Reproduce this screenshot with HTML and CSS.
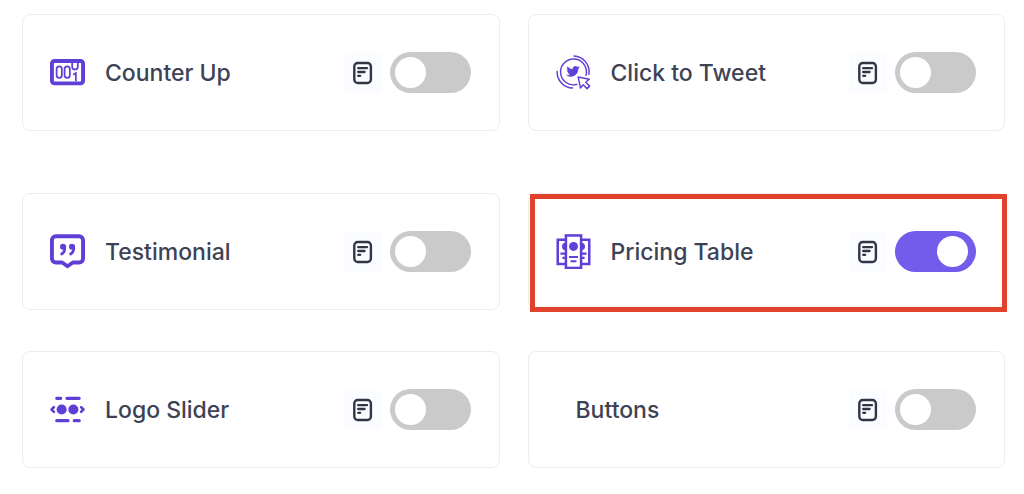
FILE: index.html
```html
<!DOCTYPE html>
<html lang="en">
<head>
<meta charset="utf-8">
<title>Blocks</title>
<link rel="stylesheet" href="styles.css">
</head>
<body>
<svg class="sprite" aria-hidden="true">
  <symbol id="doc" viewBox="0 0 20 24">
    <rect x="1.3" y="2" width="16.6" height="20" rx="3.4" fill="none" stroke="currentColor" stroke-width="2.4"/>
    <path d="M5.2 7.200h8.800M5.200 11h6.400M5.200 14.800h2" fill="none" stroke="currentColor" stroke-width="2.300" stroke-linecap="round"/>
  </symbol>
</svg>
<main class="blocks">
  <section class="group">
    <article class="card">
      <svg class="icon" viewBox="0 0 36 36" aria-hidden="true">
        <rect x="2" y="6.200" width="32" height="23" rx="2.500" fill="none" stroke="currentColor" stroke-width="4"/>
        <g fill="none" stroke="currentColor" stroke-width="1.800">
          <rect x="6.800" y="11.600" width="5.400" height="12" rx="2.700"/>
          <rect x="15" y="11.600" width="5.400" height="12" rx="2.700"/>
          <path d="M22.800 8v4a2.900 2.900 0 0 0 5.800 0V8M23.800 20.200l2.800-1.600V27"/>
        </g>
      </svg>
      <label class="name" for="counter">Counter Up</label>
      <a class="doc" href="#counter-docs" aria-label="Counter Up documentation"><svg class="doc-icon"><use href="#doc"/></svg></a>
      <input class="switch" type="checkbox" role="switch" id="counter">
    </article>
    <article class="card">
      <svg class="icon" viewBox="0 0 36 36" aria-hidden="true">
        <g fill="none" stroke="currentColor" stroke-width="1.500" stroke-linecap="round">
          <path d="M21.500 30.200A13.300 13.300 0 1 1 30.800 21"/>
          <path d="M18.500 1A16.300 16.300 0 0 1 33.800 20M1.200 17A16.300 16.300 0 0 0 17 34"/>
          <path d="M22.800 22.600l11.400 2.400-3.600 3 4 4-2.700 2.600-4-4-2.700 3.400z" fill="#fff" stroke-linejoin="round"/>
        </g>
        <path transform="translate(11 11.500) scale(.54)" d="M24 2.600a10 10 0 0 1-2.800.8 5 5 0 0 0 2.100-2.700 10 10 0 0 1-3.100 1.200 4.900 4.900 0 0 0-8.400 4.500A14 14 0 0 1 1.700 1.200a4.900 4.900 0 0 0 1.500 6.500A5 5 0 0 1 1 7.100a4.900 4.900 0 0 0 3.900 4.900 5 5 0 0 1-2.200.1 4.900 4.900 0 0 0 4.600 3.400A10 10 0 0 1 0 17.500a14 14 0 0 0 21.500-12.400A10 10 0 0 0 24 2.600z" fill="currentColor" stroke="currentColor" stroke-width="1"/>
      </svg>
      <label class="name" for="tweet">Click to Tweet</label>
      <a class="doc" href="#tweet-docs" aria-label="Click to Tweet documentation"><svg class="doc-icon"><use href="#doc"/></svg></a>
      <input class="switch" type="checkbox" role="switch" id="tweet">
    </article>
  </section>
  <section class="group">
    <article class="card">
      <svg class="icon" viewBox="0 0 36 36" aria-hidden="true">
        <path d="M6 2.300h24a4 4 0 0 1 4 4v19a4 4 0 0 1-4 4h-6.500L18 33.200l-5.500-3.900H6a4 4 0 0 1-4-4v-19a4 4 0 0 1 4-4z" fill="none" stroke="currentColor" stroke-width="4" stroke-linejoin="round"/>
        <g fill="currentColor">
          <circle cx="13.400" cy="13" r="3.100"/><circle cx="22.600" cy="13" r="3.100"/>
        </g>
        <path d="M15.200 13c.4 4-1 6.400-3.200 7.600M24.400 13c.4 4-1 6.400-3.200 7.600" fill="none" stroke="currentColor" stroke-width="2.800" stroke-linecap="round"/>
      </svg>
      <label class="name" for="testimonial">Testimonial</label>
      <a class="doc" href="#testimonial-docs" aria-label="Testimonial documentation"><svg class="doc-icon"><use href="#doc"/></svg></a>
      <input class="switch" type="checkbox" role="switch" id="testimonial">
    </article>
    <article class="card card-highlight">
      <svg class="icon" viewBox="0 0 36 36" aria-hidden="true">
        <g fill="none" stroke="currentColor" stroke-width="2.600">
          <path d="M10 5.800H1.800v25H10M26 5.800h8.200v25H26"/>
          <rect x="10.200" y="1.500" width="15.600" height="33.400"/>
          <path d="M13.400 23.600h9.200M15 28h6M4.600 20.200H10M6.600 24.600H10M26 20.200h5.400M26 24.600h3.400" stroke-width="2.200"/>
        </g>
        <g fill="currentColor">
          <circle cx="18" cy="12.800" r="4.600"/>
          <path d="M10 9a3.800 3.800 0 0 0 0 7.600zM26 9a3.800 3.800 0 0 1 0 7.600z"/>
        </g>
      </svg>
      <label class="name" for="pricing">Pricing Table</label>
      <a class="doc" href="#pricing-docs" aria-label="Pricing Table documentation"><svg class="doc-icon"><use href="#doc"/></svg></a>
      <input class="switch" type="checkbox" role="switch" id="pricing" checked>
    </article>
  </section>
  <section class="group group-close">
    <article class="card">
      <svg class="icon" viewBox="0 0 36 36" aria-hidden="true">
        <g fill="none" stroke="currentColor" stroke-width="3.400" stroke-linecap="round">
          <path d="M7 6.500h4M17.500 6.500h12.500M7 29.500h11.500M25 29.500h5"/>
          <path d="M4 15.500L1.600 18 4 20.500M32 15.500l2.400 2.500-2.400 2.500" stroke-width="2.600" stroke-linejoin="round"/>
        </g>
        <circle cx="12" cy="18" r="5.200" fill="currentColor"/>
        <circle cx="24" cy="18" r="5.200" fill="currentColor"/>
      </svg>
      <label class="name" for="logo">Logo Slider</label>
      <a class="doc" href="#logo-docs" aria-label="Logo Slider documentation"><svg class="doc-icon"><use href="#doc"/></svg></a>
      <input class="switch" type="checkbox" role="switch" id="logo">
    </article>
    <article class="card">
      <label class="name" for="buttons">Buttons</label>
      <a class="doc" href="#buttons-docs" aria-label="Buttons documentation"><svg class="doc-icon"><use href="#doc"/></svg></a>
      <input class="switch" type="checkbox" role="switch" id="buttons">
    </article>
  </section>
</main>
</body>
</html>
```
FILE: styles.css
```css
* {
  box-sizing: border-box;
}

body {
  margin: 0;
  background: #fff;
  color: #3d4355;
  font-family: Inter, "Liberation Sans", sans-serif;
}

.sprite {
  position: absolute;
  width: 0;
  height: 0;
}

.blocks {
  padding: 14px 19px 24px 22px;
}

.group {
  display: grid;
  grid-template-columns: 1fr 1fr;
  gap: 28px;
  margin-bottom: 62px;
}

.group-close {
  margin-top: -21px;
  margin-bottom: 0;
}

.card {
  position: relative;
  display: flex;
  align-items: center;
  padding: 37px 28px 37px 27px;
  border: 1px solid #ededed;
  border-radius: 8px;
}

.card-highlight::after {
  content: "";
  position: absolute;
  inset: 0 -3px -3px 1px;
  border: 5px solid #e2412c;
  pointer-events: none;
}

.icon {
  flex: none;
  width: 35px;
  height: 35px;
  color: #5f3fd6;
}

.name {
  flex: 1;
  margin-left: 20px;
  font-size: 23px;
  font-weight: 500;
  line-height: 32px;
}

.doc {
  display: flex;
  align-items: center;
  justify-content: center;
  width: 38px;
  height: 40px;
  margin-right: 8px;
  border-radius: 4px;
  background: #fafcff;
  color: #343447;
}

.doc-icon {
  width: 20px;
  height: 24px;
}

.switch {
  flex: none;
  appearance: none;
  width: 81px;
  height: 41px;
  margin: 0;
  padding: 5px;
  border-radius: 21px;
  background: #cacaca;
  cursor: pointer;
}

.switch::before {
  content: "";
  display: block;
  width: 31px;
  height: 31px;
  border-radius: 50%;
  background: #fff;
}

.switch:checked {
  background: #735cec;
}

.switch:checked::before {
  margin-left: 37px;
}
```
